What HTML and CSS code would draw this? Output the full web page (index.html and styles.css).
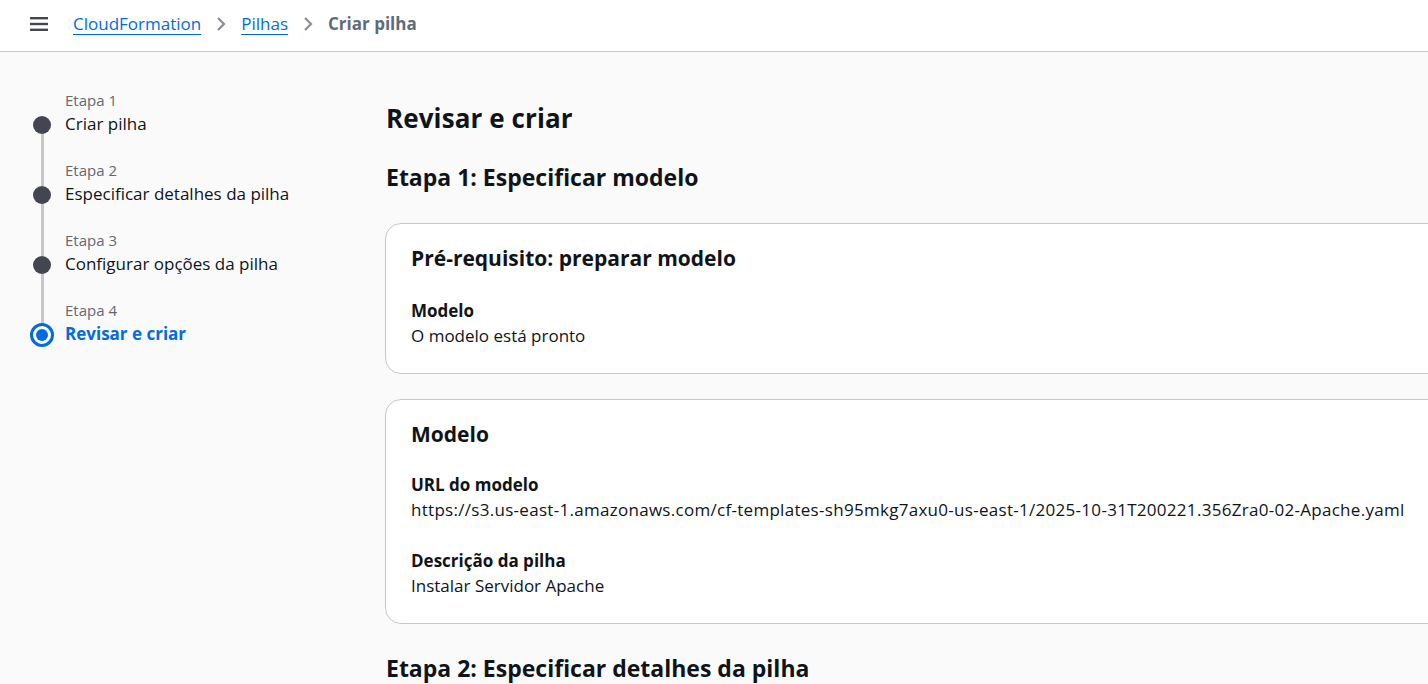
FILE: index.html
```html
<!DOCTYPE html>
<html lang="pt-BR">
<head>
<meta charset="utf-8">
<title>Criar pilha</title>
<link rel="stylesheet" href="styles.css">
</head>
<body>
<header class="topbar">
  <svg class="menu" width="18" height="14" viewBox="0 0 18 14"><rect x="0" y="0" width="18" height="2.4" fill="#424650"/><rect x="0" y="5.8" width="18" height="2.4" fill="#424650"/><rect x="0" y="11.6" width="18" height="2.4" fill="#424650"/></svg>
  <nav class="crumbs">
    <a class="crumb-link" href="#">CloudFormation</a>
    <svg class="chev" width="10" height="16" viewBox="0 0 10 16"><polyline points="2,2 8,8 2,14" fill="none" stroke="#8c8c94" stroke-width="2.2"/></svg>
    <a class="crumb-link" href="#">Pilhas</a>
    <svg class="chev" width="10" height="16" viewBox="0 0 10 16"><polyline points="2,2 8,8 2,14" fill="none" stroke="#8c8c94" stroke-width="2.2"/></svg>
    <span class="crumb-current">Criar pilha</span>
  </nav>
</header>
<div class="layout">
  <aside class="steps">
    <div class="step first">
      <div class="rail"><span class="seg top"></span><span class="dot"></span><span class="seg bottom"></span></div>
      <div class="step-text"><div class="step-num">Etapa 1</div><div class="step-title">Criar pilha</div></div>
    </div>
    <div class="step">
      <div class="rail"><span class="seg top"></span><span class="dot"></span><span class="seg bottom"></span></div>
      <div class="step-text"><div class="step-num">Etapa 2</div><div class="step-title">Especificar detalhes da pilha</div></div>
    </div>
    <div class="step">
      <div class="rail"><span class="seg top"></span><span class="dot"></span><span class="seg bottom"></span></div>
      <div class="step-text"><div class="step-num">Etapa 3</div><div class="step-title">Configurar opções da pilha</div></div>
    </div>
    <div class="step last active">
      <div class="rail"><span class="seg top"></span><span class="dot"></span><span class="seg bottom"></span></div>
      <div class="step-text"><div class="step-num">Etapa 4</div><div class="step-title">Revisar e criar</div></div>
    </div>
  </aside>
  <main class="main">
    <h1 class="page-title">Revisar e criar</h1>
    <h2 class="section-title">Etapa 1: Especificar modelo</h2>
    <section class="card">
      <h3 class="card-title">Pré-requisito: preparar modelo</h3>
      <div class="field">
        <div class="label">Modelo</div>
        <div class="value">O modelo está pronto</div>
      </div>
    </section>
    <section class="card details">
      <h3 class="card-title">Modelo</h3>
      <div class="field">
        <div class="label">URL do modelo</div>
        <div class="value url">https://s3.us-east-1.amazonaws.com/cf-templates-sh95mkg7axu0-us-east-1/2025-10-31T200221.356Zra0-02-Apache.yaml</div>
      </div>
      <div class="field">
        <div class="label">Descrição da pilha</div>
        <div class="value">Instalar Servidor Apache</div>
      </div>
    </section>
    <h2 class="section-title next">Etapa 2: Especificar detalhes da pilha</h2>
  </main>
</div>
</body>
</html>
```
FILE: styles.css
```css
* { box-sizing: border-box; }
html, body { margin: 0; padding: 0; }
body {
  font-family: "Open Sans", "Noto Sans", Arial, sans-serif;
  color: #0f141a;
  background: #fafafa;
  overflow: hidden;
  width: 1428px;
  height: 684px;
}
.topbar {
  height: 52px;
  background: #ffffff;
  border-bottom: 1px solid #c6c6cd;
  display: flex;
  align-items: center;
  padding: 0 0 3px 30px;
}
.menu { display: block; margin-right: 25px; }
.crumbs { display: flex; align-items: center; font-size: 17px; line-height: 24px; }
.crumb-link {
  color: #006ce0;
  text-decoration: underline;
  text-underline-offset: 4px;
  text-decoration-thickness: 1px;
}
.chev { display: block; margin: 0 15px; }
.crumb-current { color: #5f6b7a; font-weight: 700; }

.layout { display: flex; }
.steps {
  width: 385px;
  flex: none;
  padding: 38px 0 0 30px;
}
.step { display: flex; }
.rail {
  width: 24px;
  margin-right: 11px;
  display: flex;
  flex-direction: column;
  align-items: center;
}
.seg { width: 3px; background: #c6c6cd; }
.seg.top { height: 26px; }
.seg.bottom { flex: 1; }
.first .seg.top, .last .seg.bottom { background: transparent; }
.dot {
  width: 18px; height: 18px; border-radius: 50%;
  background: #424650;
  flex: none;
}
.active .dot {
  width: 24px; height: 24px;
  margin: -3px 0;
  background: #fff;
  border: 3px solid #006ce0;
  position: relative;
}
.active .dot::after {
  content: "";
  position: absolute;
  left: 3px; top: 3px;
  width: 12px; height: 12px;
  border-radius: 50%;
  background: #006ce0;
}
.step-text { padding-bottom: 24px; }
.step-num { font-size: 15px; line-height: 20px; color: #656871; }
.step-title { font-size: 17px; line-height: 24px; margin-top: 2px; color: #0f141a; }
.active .step-title { color: #006ce0; font-weight: 700; }

.main {
  width: 1200px;
  flex: none;
  padding-top: 50px;
}
.page-title {
  margin: 0;
  font-size: 26px;
  line-height: 32px;
  font-weight: 700;
  padding-left: 1px;
  letter-spacing: 0.1px;
}
.section-title {
  margin: 28px 0 31px;
  font-size: 23px;
  line-height: 30px;
  font-weight: 700;
  padding-left: 1px;
}
.section-title.next { margin-top: 29px; }
.card {
  background: #fff;
  border: 1px solid #c6c6cd;
  border-radius: 16px;
  padding: 20px 25px 26px;
  margin-bottom: 25px;
}
.card-title {
  margin: 0 0 28px;
  font-size: 21px;
  line-height: 28px;
  font-weight: 700;
}
.details .card-title { margin-bottom: 26px; }
.field + .field { margin-top: 29px; }
.label { font-size: 17px; line-height: 22px; font-weight: 700; }
.value { font-size: 17px; line-height: 22px; margin-top: 3px; }
.value.url { letter-spacing: 0.29px; }
```
